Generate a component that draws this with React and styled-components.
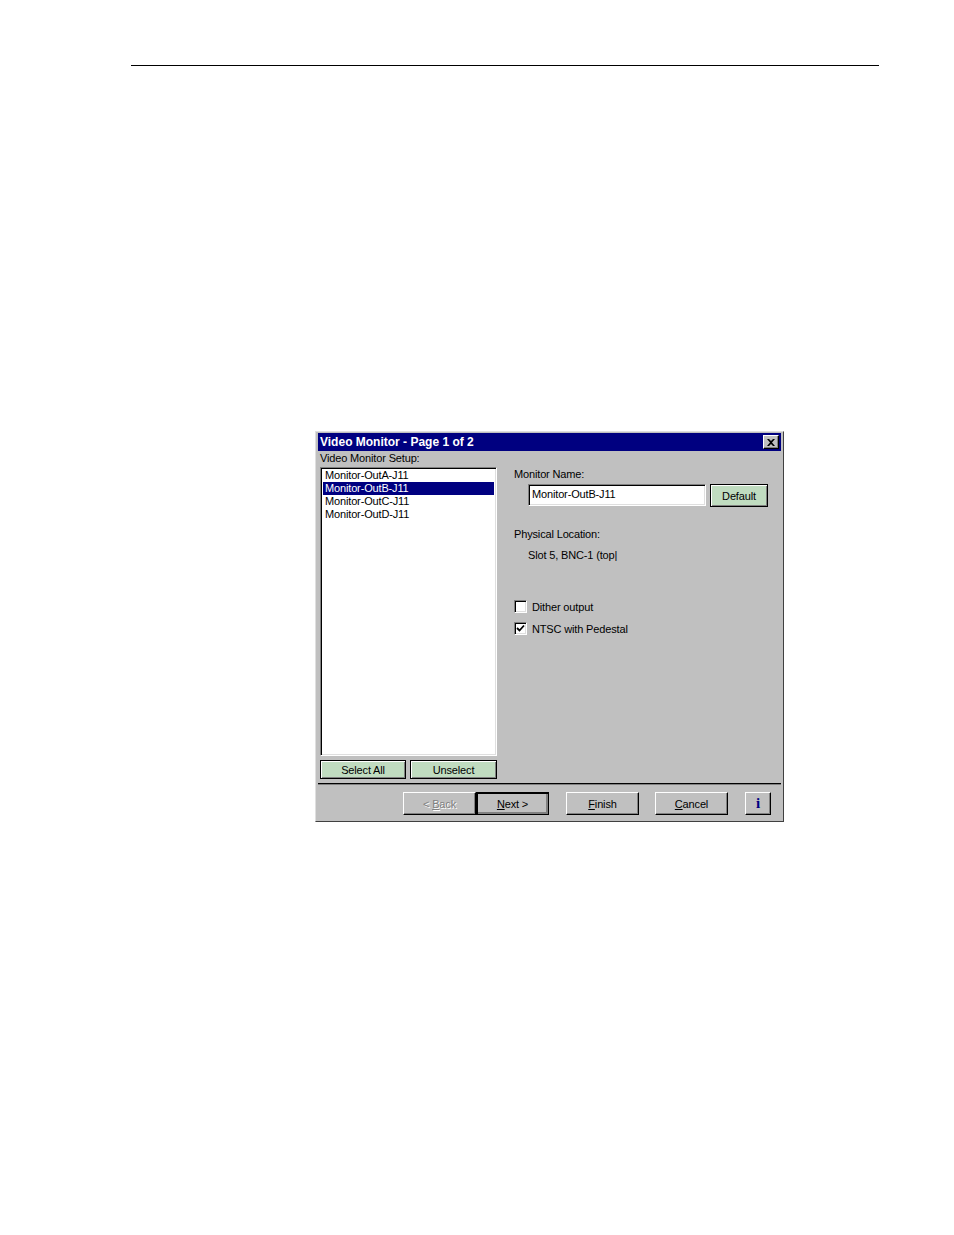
import styled, { createGlobalStyle } from 'styled-components';

const GlobalStyle = createGlobalStyle`
  html, body {
    margin: 0;
    padding: 0;
    background: #ffffff;
  }
  body {
    font-family: "Liberation Sans", Arial, sans-serif;
  }
`;

const monitors = ['Monitor-OutA-J11', 'Monitor-OutB-J11', 'Monitor-OutC-J11', 'Monitor-OutD-J11'];

export default function App() {
  return (
    <Page>
      <GlobalStyle />
      <TopRule />
      <Dialog>
        <TitleBar>
          <span>Video Monitor - Page 1 of 2</span>
          <CloseButton aria-label="close">
            <svg width="8" height="7" viewBox="0 0 8 7">
              <path d="M0 0 L2 0 L4 2 L6 0 L8 0 L5 3.5 L8 7 L6 7 L4 5 L2 7 L0 7 L3 3.5 Z" fill="#000" />
            </svg>
          </CloseButton>
        </TitleBar>
        <Body>
          <LeftColumn>
            <Label>Video Monitor Setup:</Label>
            <ListBox>
              {monitors.map((m, i) => (
                <ListItem key={m} $selected={i === 1}>{m}</ListItem>
              ))}
            </ListBox>
            <ButtonRow>
              <GreenButton $width={87}>Select All</GreenButton>
              <GreenButton $width={88}>Unselect</GreenButton>
            </ButtonRow>
          </LeftColumn>
          <RightColumn>
            <Label>Monitor Name:</Label>
            <NameRow>
              <TextField>Monitor-OutB-J11</TextField>
              <GreenButton $width={58} $height={23}>Default</GreenButton>
            </NameRow>
            <Label $top={20}>Physical Location:</Label>
            <Indented>Slot 5, BNC-1 (top|</Indented>
            <CheckRow $top={38}>
              <CheckBox />
              <span>Dither output</span>
            </CheckRow>
            <CheckRow $top={9}>
              <CheckBox>
                <svg width="9" height="9" viewBox="0 0 9 9">
                  <path d="M1 4 L3.5 6.5 L8 1.5" stroke="#000" strokeWidth="1.8" fill="none" />
                </svg>
              </CheckBox>
              <span>NTSC with Pedestal</span>
            </CheckRow>
          </RightColumn>
        </Body>
        <Separator />
        <Footer>
          <FooterButton disabled>
            &lt;&nbsp;<u>B</u>ack
          </FooterButton>
          <FooterButton $default>
            <u>N</u>ext &gt;
          </FooterButton>
          <FooterButton $gap={17}>
            <u>F</u>inish
          </FooterButton>
          <FooterButton $gap={16}>
            <u>C</u>ancel
          </FooterButton>
          <InfoButton>i</InfoButton>
        </Footer>
      </Dialog>
    </Page>
  );
}

const Page = styled.div`
  width: 954px;
  height: 1235px;
  padding-top: 65px;
  box-sizing: border-box;
`;

const TopRule = styled.div`
  margin-left: 131px;
  width: 748px;
  height: 1px;
  background: #000;
`;

const Dialog = styled.div`
  margin: 365px 0 0 315px;
  width: 469px;
  height: 391px;
  box-sizing: border-box;
  background: #c0c0c0;
  border-top: 1px solid #dfdfdf;
  border-left: 1px solid #dfdfdf;
  border-right: 1px solid #404040;
  border-bottom: 1px solid #404040;
  padding: 1px 2px 2px 2px;
  display: flex;
  flex-direction: column;
  font-size: 11px;
  letter-spacing: -0.15px;
  color: #000;
`;

const TitleBar = styled.div`
  height: 18px;
  background: #000080;
  color: #fff;
  font-weight: bold;
  font-size: 12px;
  letter-spacing: 0;
  display: flex;
  align-items: center;
  justify-content: space-between;
  padding: 0 2px 0 2px;
`;

const CloseButton = styled.div`
  width: 16px;
  height: 14px;
  box-sizing: border-box;
  background: #c0c0c0;
  border-top: 1px solid #fff;
  border-left: 1px solid #fff;
  border-right: 1px solid #000;
  border-bottom: 1px solid #000;
  box-shadow: inset -1px -1px 0 #808080;
  display: flex;
  align-items: center;
  justify-content: center;
`;

const Body = styled.div`
  display: grid;
  grid-template-columns: 179px 1fr;
  flex: 1;
`;

const LeftColumn = styled.div`
  padding: 0 0 0 2px;
  display: flex;
  flex-direction: column;
`;

const RightColumn = styled.div`
  padding: 16px 0 0 17px;
  display: flex;
  flex-direction: column;
  align-items: flex-start;
`;

const Label = styled.div`
  height: 14px;
  line-height: 14px;
  margin-top: ${p => p.$top || 0}px;
  white-space: nowrap;
`;

const ListBox = styled.div`
  margin-top: 2px;
  width: 177px;
  height: 289px;
  box-sizing: border-box;
  background: #fff;
  border-top: 1px solid #808080;
  border-left: 1px solid #808080;
  border-right: 1px solid #fff;
  border-bottom: 1px solid #fff;
  box-shadow: inset 1px 1px 0 #000, inset -1px -1px 0 #dfdfdf;
  padding: 1px 2px;
`;

const ListItem = styled.div`
  height: 13px;
  line-height: 13px;
  padding-left: 2px;
  background: ${p => (p.$selected ? '#000080' : 'transparent')};
  color: ${p => (p.$selected ? '#fff' : '#000')};
`;

const ButtonRow = styled.div`
  display: flex;
  gap: 4px;
  margin-top: 4px;
`;

const GreenButton = styled.div`
  width: ${p => p.$width}px;
  height: ${p => p.$height || 19}px;
  box-sizing: border-box;
  background: #c0dcc0;
  border: 1px solid #000;
  box-shadow: inset 1px 1px 0 #fff, inset -1px -1px 0 #808080;
  display: flex;
  align-items: center;
  justify-content: center;
`;

const NameRow = styled.div`
  display: flex;
  align-items: flex-start;
  gap: 4px;
  margin: 3px 0 0 14px;
`;

const TextField = styled.div`
  width: 178px;
  height: 22px;
  box-sizing: border-box;
  background: #fff;
  border-top: 1px solid #808080;
  border-left: 1px solid #808080;
  border-right: 1px solid #fff;
  border-bottom: 1px solid #fff;
  box-shadow: inset 1px 1px 0 #000, inset -1px -1px 0 #dfdfdf;
  padding: 2px 0 0 3px;
  line-height: 14px;
`;

const Indented = styled.div`
  margin: 7px 0 0 14px;
  height: 14px;
  line-height: 14px;
`;

const CheckRow = styled.label`
  display: flex;
  align-items: center;
  gap: 5px;
  margin-top: ${p => p.$top}px;
  height: 13px;
`;

const CheckBox = styled.span`
  width: 13px;
  height: 13px;
  box-sizing: border-box;
  background: #fff;
  border-top: 1px solid #808080;
  border-left: 1px solid #808080;
  border-right: 1px solid #fff;
  border-bottom: 1px solid #fff;
  box-shadow: inset 1px 1px 0 #000, inset -1px -1px 0 #dfdfdf;
  display: flex;
  align-items: center;
  justify-content: center;
`;

const Separator = styled.div`
  height: 1px;
  background: #000;
  border-bottom: 1px solid #808080;
  margin-bottom: 7px;
`;

const Footer = styled.div`
  display: flex;
  padding-left: 85px;
  height: 23px;
  margin-bottom: 4px;
`;

const FooterButton = styled.div`
  width: 73px;
  height: 23px;
  box-sizing: border-box;
  margin-left: ${p => p.$gap || 0}px;
  background: #c0c0c0;
  border-top: 1px solid #fff;
  border-left: 1px solid #fff;
  border-right: 1px solid #000;
  border-bottom: 1px solid #000;
  box-shadow: ${p => (p.$default ? 'inset 1px 1px 0 #000, inset -2px -2px 0 #808080' : 'inset -1px -1px 0 #808080')};
  ${p => p.$default && 'border: 1px solid #000;'}
  color: ${p => (p.disabled ? '#808080' : '#000')};
  text-shadow: ${p => (p.disabled ? '1px 1px 0 #fff' : 'none')};
  display: flex;
  align-items: center;
  justify-content: center;
  u {
    text-decoration: underline;
  }
`;

const InfoButton = styled.div`
  width: 26px;
  height: 23px;
  box-sizing: border-box;
  margin-left: 17px;
  background: #c0c0c0;
  border-top: 1px solid #fff;
  border-left: 1px solid #fff;
  border-right: 1px solid #000;
  border-bottom: 1px solid #000;
  box-shadow: inset -1px -1px 0 #808080;
  color: #000080;
  font-family: "Liberation Serif", "Times New Roman", serif;
  font-weight: bold;
  font-size: 15px;
  display: flex;
  align-items: center;
  justify-content: center;
`;
